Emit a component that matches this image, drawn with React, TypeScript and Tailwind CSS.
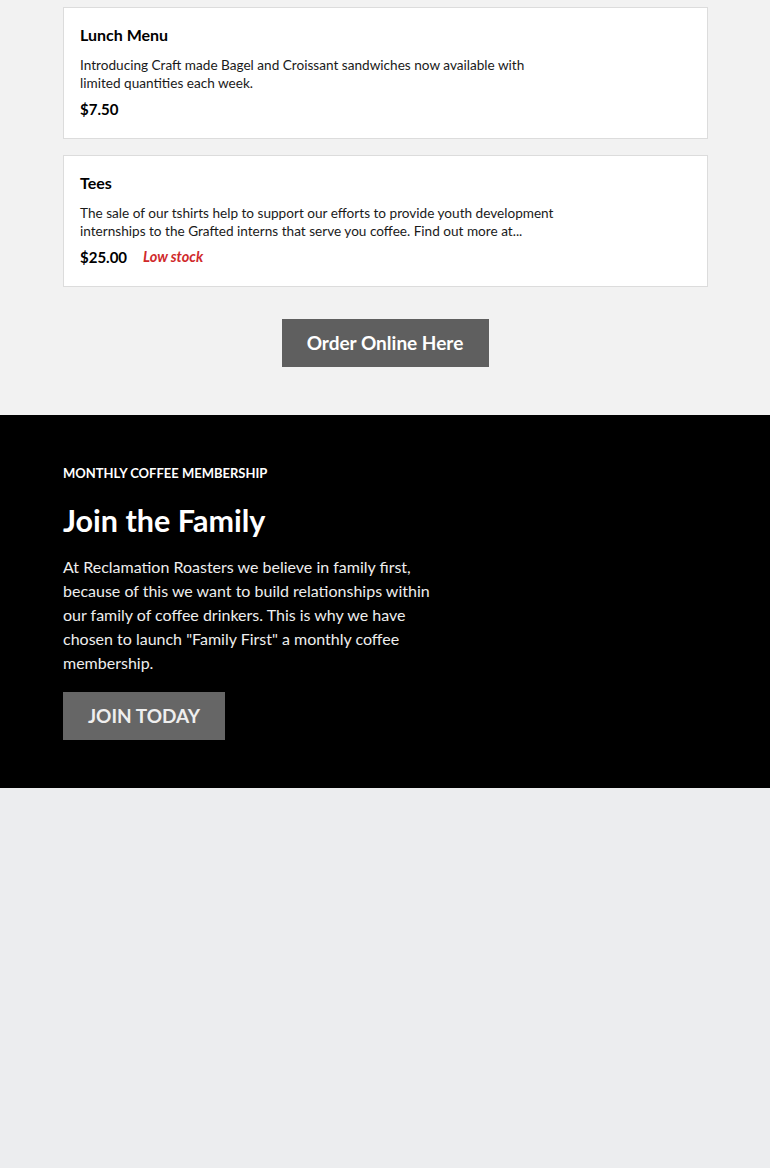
import React from "react";

type Item = {
  title: string;
  description: string;
  price: string;
  lowStock?: boolean;
};

const items: Item[] = [
  {
    title: "Lunch Menu",
    description:
      "Introducing Craft made Bagel and Croissant sandwiches now available with limited quantities each week.",
    price: "$7.50",
  },
  {
    title: "Tees",
    description:
      "The sale of our tshirts help to support our efforts to provide youth development internships to the Grafted interns that serve you coffee. Find out more at...",
    price: "$25.00",
    lowStock: true,
  },
];

const ItemCard = ({ item }: { item: Item }) => (
  <div className="bg-white border border-[#dcdcdc] px-4 pt-[17px] pb-[19px]">
    <h3 className="text-[16px] leading-5 font-bold text-black">{item.title}</h3>
    <p className="mt-[11px] max-w-[480px] text-[13.6px] leading-[18px] text-[#1a1a1a]">
      {item.description}
    </p>
    <div className="mt-[7px] flex items-center gap-4">
      <span className="text-[15px] leading-5 font-bold text-black">{item.price}</span>
      {item.lowStock && (
        <span className="text-[14.5px] leading-5 font-bold italic text-[#d0292b]">
          Low stock
        </span>
      )}
    </div>
  </div>
);

const App = () => {
  return (
    <div
      className="min-h-screen bg-[#ecedef]"
      style={{ fontFamily: "Lato, 'Noto Sans', sans-serif" }}
    >
      <section className="bg-[#f2f2f2] pt-[7px] pb-12">
        <div className="ml-[63px] mr-[62px] flex flex-col gap-4">
          {items.map((item) => (
            <ItemCard key={item.title} item={item} />
          ))}
        </div>
        <div className="mt-8 flex justify-center">
          <button className="h-12 w-[207px] bg-[#5f5f5f] text-[19px] font-bold text-white">
            Order Online Here
          </button>
        </div>
      </section>

      <section className="bg-black px-[63px] pt-[50px] pb-12">
        <p className="text-[13px] leading-4 font-bold uppercase text-white">
          Monthly Coffee Membership
        </p>
        <h2 className="mt-[21px] text-[30.5px] leading-9 font-bold text-white">
          Join the Family
        </h2>
        <p className="mt-[17px] max-w-[375px] text-base leading-6 text-[#eeeeee]">
          At Reclamation Roasters we believe in family first, because of this we
          want to build relationships within our family of coffee drinkers. This
          is why we have chosen to launch "Family First" a monthly coffee
          membership.
        </p>
        <button className="mt-[17px] h-12 w-[162px] bg-[#666666] text-[19px] font-bold uppercase text-[#eeeeee]">
          Join Today
        </button>
      </section>
    </div>
  );
};

export default App;
